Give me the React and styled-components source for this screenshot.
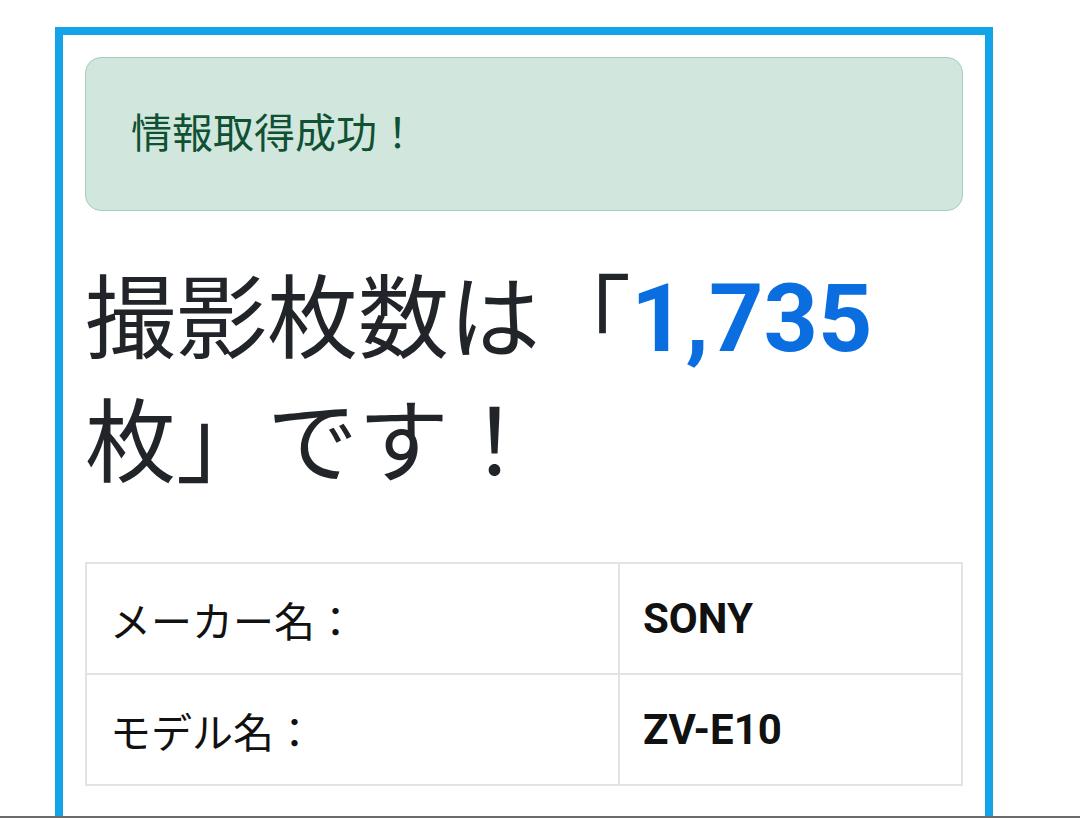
import React from "react";
import styled, { createGlobalStyle } from "styled-components";

const Global = createGlobalStyle`
  html, body {
    margin: 0;
    padding: 0;
    background: #ffffff;
    font-family: Roboto, "Noto Sans CJK JP", "Noto Sans", sans-serif;
    color: #212529;
    overflow: hidden;
  }
  * { box-sizing: border-box; }
`;

const Page = styled.div`
  height: 818px;
  padding: 27px 0 0 55px;
`;

const Frame = styled.div`
  width: 938px;
  min-height: 900px;
  border: 8px solid #12a3e8;
  padding: 22px 22px 60px 22px;
`;

const Alert = styled.div`
  background: #d1e7dd;
  border: 1.5px solid #a3cfbb;
  border-radius: 16px;
  color: #0f5132;
  font-size: 41px;
  line-height: 62px;
  padding: 45px 45px;
`;

const Heading = styled.h1`
  margin: 46px 0 0 0;
  font-size: 91px;
  line-height: 124px;
  font-weight: 400;
  color: #212529;
`;

const Count = styled.span`
  color: #0b6ee0;
  font-weight: 700;
  font-size: 95px;
`;

const Table = styled.table`
  margin-top: 56px;
  width: 100%;
  border-collapse: collapse;
  border: 2px solid #e2e3e5;
`;

const Cell = styled.td`
  border: 2px solid #e2e3e5;
  height: 111px;
  padding: 0 0 0 23px;
  vertical-align: middle;
  font-size: ${(p) => (p.$bold ? "42px" : "41px")};
  font-weight: ${(p) => (p.$bold ? 700 : 400)};
  color: #111111;
  width: ${(p) => p.$w || "auto"};
`;

const ScreenEdge = styled.div`
  position: fixed;
  left: 0;
  right: 0;
  bottom: 0;
  height: 2px;
  background: #6b6b6b;
`;

const rows = [
  { label: "メーカー名：", value: "SONY" },
  { label: "モデル名：", value: "ZV-E10" },
];

export default function App() {
  return (
    <>
      <Global />
      <Page>
        <Frame>
          <Alert>情報取得成功！</Alert>
          <Heading>
            撮影枚数は「<Count>1,735</Count>
            <br />
            枚」です！
          </Heading>
          <Table>
            <tbody>
              {rows.map((r) => (
                <tr key={r.label}>
                  <Cell $w="533px">{r.label}</Cell>
                  <Cell $bold>{r.value}</Cell>
                </tr>
              ))}
            </tbody>
          </Table>
        </Frame>
      </Page>
      <ScreenEdge />
    </>
  );
}
